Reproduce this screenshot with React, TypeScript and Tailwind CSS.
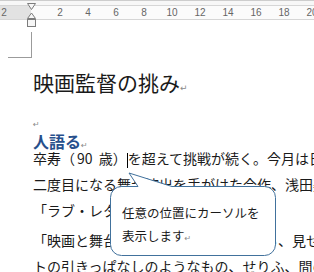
import React from 'react';

const jp = "font-['Noto_Sans_CJK_JP','Noto_Sans',sans-serif]";

const Mark: React.FC<{className?: string}> = ({className = ''}) => (
    <span className={`font-['DejaVu_Sans',sans-serif] text-[8px] text-[#8a8a8a] ${className}`}>↵</span>
);

const rulerNums = ['2', '', '2', '4', '6', '8', '10', '12', '14', '16', '18', '20'];

const Ruler: React.FC = () => (
    <div className="relative h-[20px]">
        <div className="h-px bg-[#cdcdcd]"/>
        <div className="h-[4px] bg-[#f7f7f7]"/>
        <div
            className="flex h-[15px] items-center border-y border-[#d6d6d6] bg-[linear-gradient(to_right,#e2e2e2_31px,#fbfbfb_31px)]">
            <div className="-ml-[10px] flex pt-px">
                {rulerNums.map((n, i) => (
                    <span key={i}
                          className="w-[28px] shrink-0 text-center font-['Liberation_Sans',sans-serif] text-[10px] leading-[12px] text-[#666]">
                        {n}
                    </span>
                ))}
            </div>
        </div>
        {/* indent markers */}
        <svg className="absolute left-[26px] top-[2px]" width="11" height="26" viewBox="0 0 11 26">
            <path d="M1.5 1.5 H9.5 L5.5 7.5 Z" fill="#f6f6f6" stroke="#7c7c7c"/>
            <path d="M5.5 11 L1.5 16.5 H9.5 Z" fill="#f6f6f6" stroke="#7c7c7c"/>
            <rect x="1.5" y="17.5" width="8" height="7" fill="#f6f6f6" stroke="#7c7c7c"/>
        </svg>
    </div>
);

const Callout: React.FC = () => (
    <div className="absolute left-[108px] top-[170px] h-[90px] w-[170px]">
        <svg className="absolute inset-0" width="170" height="90" viewBox="0 0 170 90">
            <path
                d="M30 16.5 L21 3 L64 16.5 L156.5 16.5 A11 11 0 0 1 167.5 27.5 L167.5 74.5 A11 11 0 0 1 156.5 85.5 L13.5 85.5 A11 11 0 0 1 2.5 74.5 L2.5 27.5 A11 11 0 0 1 13.5 16.5 Z"
                fill="#ffffff" stroke="#41719c" strokeWidth="1"/>
        </svg>
        <div className={`relative pl-[14px] pt-[31px] text-[12.5px] leading-[23px] text-[#1a1a1a] ${jp}`}>
            <div className="whitespace-nowrap">任意の位置にカーソルを</div>
            <div className="whitespace-nowrap">表示します<Mark/></div>
        </div>
    </div>
);

export default function App() {
    return (
        <div className="relative h-[272px] w-[314px] overflow-hidden bg-white">
            <Ruler/>

            <div className={`text-[#1a1a1a] ${jp}`}>
                <div className="ml-[8px] mt-[12px] h-[26px] w-[24px] border-b border-r border-[#9b9b9b]"/>

                <div className="pl-[33px]">
                    <div className="mt-[9px] h-[30px] whitespace-nowrap text-[21px] leading-[30px]">
                        映画監督の挑み<Mark className="text-[9px]"/>
                    </div>

                    <div className="mt-[13px] h-[20px] leading-[20px]">
                        <Mark/>
                    </div>

                    <div className="mt-[3px] h-[16px] whitespace-nowrap text-[16px] font-bold leading-[16px] text-[#274f8c]">
                        人語る<Mark className="font-normal"/>
                    </div>

                    <div className="-mt-[4px] whitespace-nowrap text-[14px] leading-[26px]">
                        <div>
                            卒寿（<span className="ml-[2px] mr-[3px]">90 </span>歳）
                            <span className="inline-block h-[15px] w-px bg-black align-middle"/>
                            を超えて挑戦が続く。今月は日本
                        </div>
                        <div>二度目になる舞台演出を手がけた今作、浅田美代子</div>
                        <div>「ラブ・レター」を上演する。<Mark/></div>
                        <div>「映画と舞台は、全く違うものだ<span className="ml-[7px]">から、見せ方</span></div>
                        <div>トの引きっぱなしのようなもの、せりふ、間の</div>
                    </div>
                </div>
            </div>

            <Callout/>
        </div>
    );
}
